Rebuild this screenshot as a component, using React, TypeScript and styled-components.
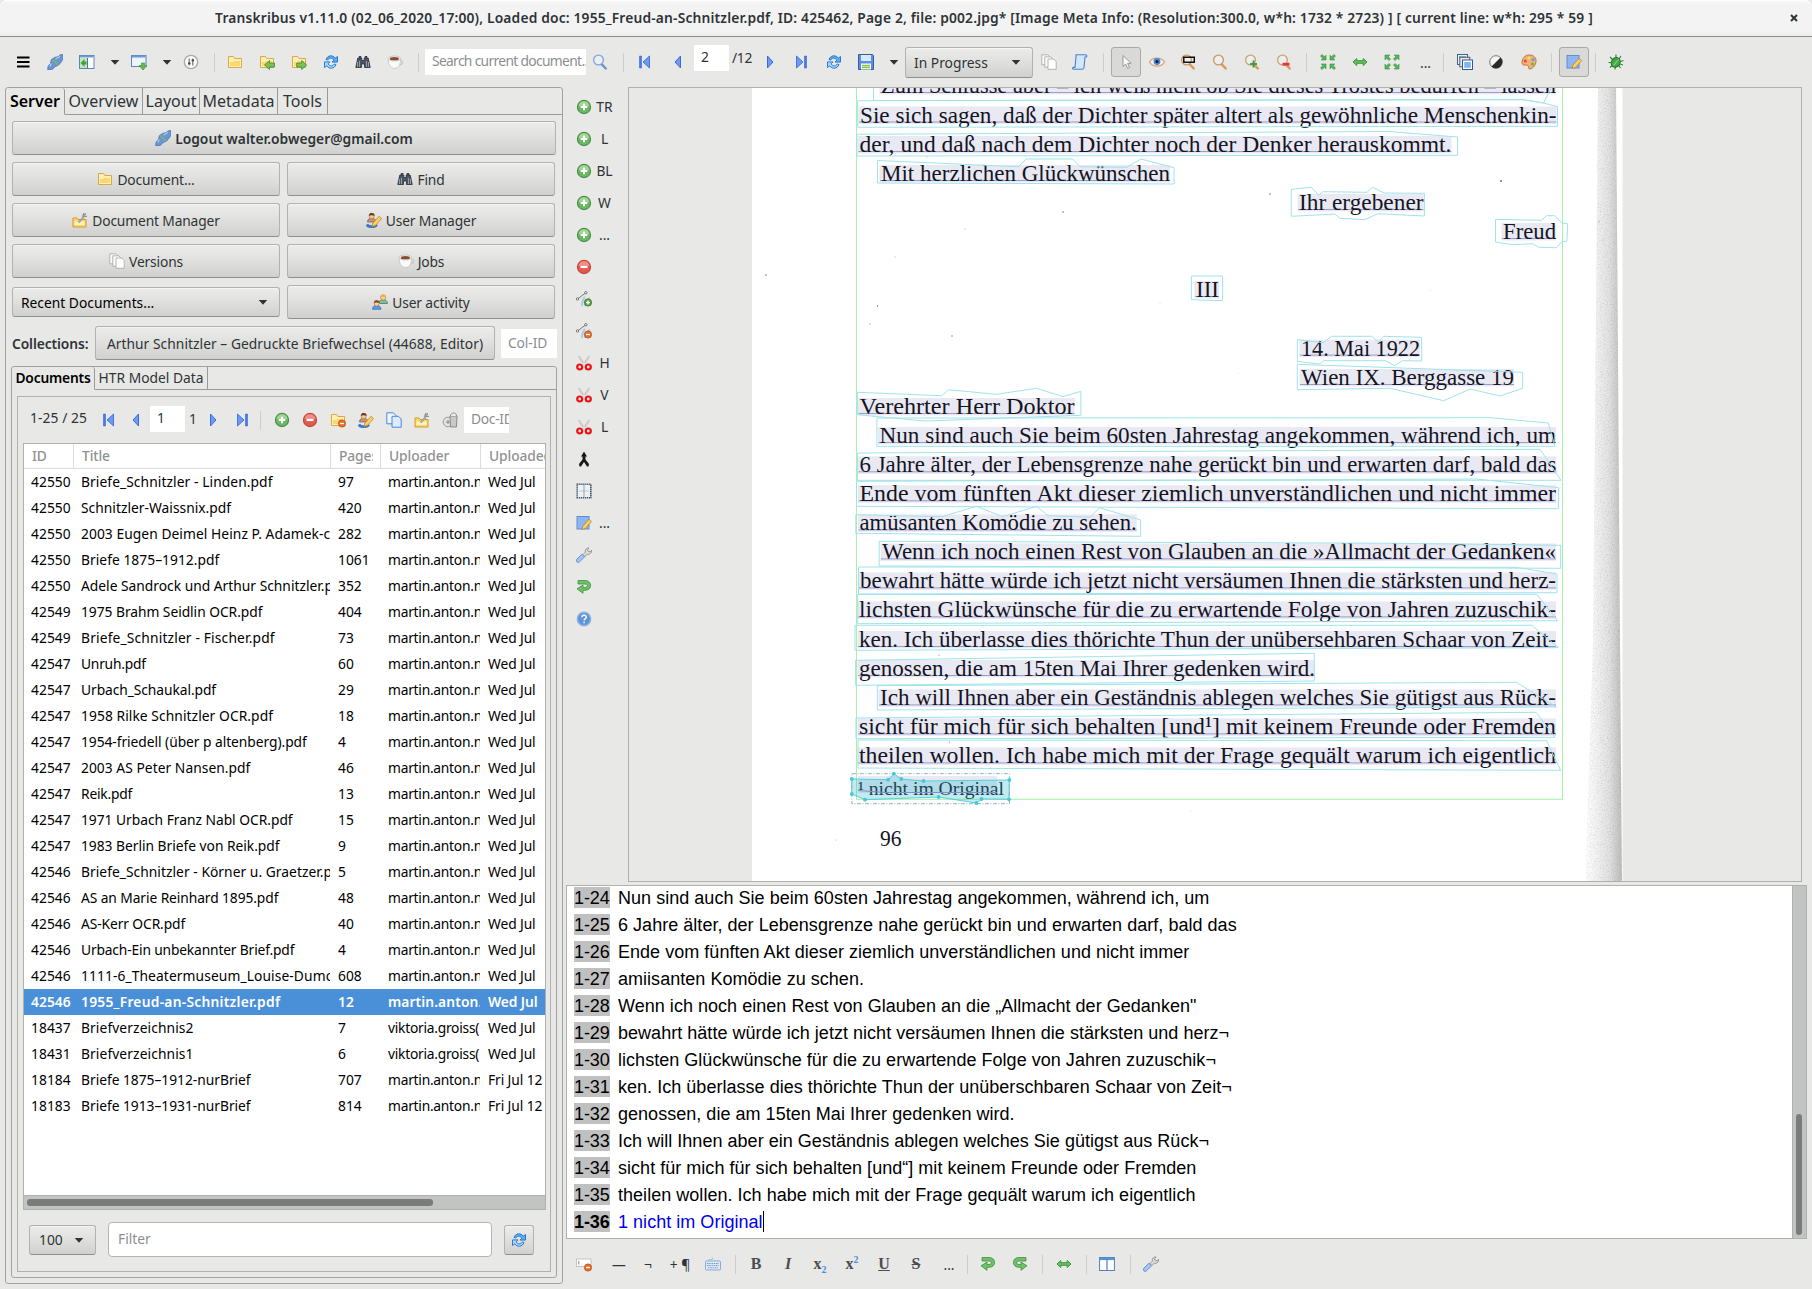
import React from 'react';
import styled, { createGlobalStyle, css } from 'styled-components';

const GlobalStyle = createGlobalStyle`
  * { box-sizing: border-box; }
  html, body { margin: 0; padding: 0; background: #e8e8e7; }
  body {
    width: 1812px; height: 1289px; overflow: hidden;
    font-family: "Noto Sans", "Open Sans", sans-serif;
    font-size: 13.8px; color: #2e3436;
  }
  svg { display: block; flex: none; }
`;

/* ---------- icons ---------- */

type IconName =
  | 'menu' | 'plug' | 'dock' | 'windowDown' | 'settings' | 'folder' | 'folderIn' | 'folderOut'
  | 'refresh' | 'binoculars' | 'cup' | 'search' | 'first' | 'prev' | 'next' | 'last' | 'save'
  | 'pages' | 'scroll' | 'cursor' | 'eye' | 'zoomRect' | 'zoom' | 'zoomIn' | 'zoomOut' | 'shrink'
  | 'widthArrow' | 'expand' | 'images' | 'contrast' | 'palette' | 'edit' | 'bug' | 'add' | 'remove'
  | 'folderRemove' | 'user' | 'users' | 'copy' | 'manager' | 'trash' | 'pointAdd' | 'pointRemove'
  | 'scissors' | 'merge' | 'tableBox' | 'wrench' | 'undo' | 'redo' | 'help' | 'fieldRemove'
  | 'keyboard' | 'columns' | 'caret';

const folderShape = (
  <>
    <path d="M1.500 13.500V2.500h5l1.300 2h6.700v9z" fill="#fdf0b4" stroke="#dfa546" />
    <path d="M2.500 12.500v-5h4l1-1h6v6z" fill="#f8d970" stroke="#fff3c0" strokeWidth=".7" />
  </>
);
const badge = (color: string, edge: string, plus: boolean) => (
  <>
    <circle cx="12" cy="11.500" r="3.600" fill={color} stroke={edge} strokeWidth=".8" />
    <path d={plus ? 'M10 11.500h4M12 9.500v4' : 'M10 11.500h4'} stroke="#fff" strokeWidth="1.300" />
  </>
);
const lens = (ring: string, handle: string) => (
  <>
    <path d="M9.800 10.300l4 4.200" stroke={handle} strokeWidth="2.400" strokeLinecap="round" />
    <circle cx="6.500" cy="6" r="4.900" fill="#eceff1" fillOpacity=".8" stroke={ring} strokeWidth="1.300" />
  </>
);
const curveShape = (
  <>
    <path d="M6 15c0-4 1-7 3-9M9 15c0-4 1-6 5-8" stroke="#a9c8ef" strokeWidth="2" fill="none" />
    <path d="M1.500 8L9.500 2" stroke="#777" fill="none" />
    <circle cx="1.500" cy="8" r="1.200" fill="#fff" stroke="#555" strokeWidth=".8" />
    <circle cx="9.800" cy="1.800" r="1.200" fill="#fff" stroke="#555" strokeWidth=".8" />
  </>
);
const personHead = (x: number, y: number, shirt: string, hair: string) => (
  <g transform={`translate(${x} ${y})`}>
    <path d="M0 9c0-3 2-3.800 4-3.800S8.500 6 8.500 9z" fill={shirt} stroke="#2f67b5" strokeWidth=".7" />
    <circle cx="4.200" cy="3" r="2.600" fill="#fbcf9b" stroke="#b5722d" strokeWidth=".6" />
    <path d="M1.400 3C1.200.5 3 0 4.300 0s3 .6 2.800 2.800C5.500 2.500 3 1.500 1.400 3z" fill={hair} />
  </g>
);
const pencilShape = (
  <path d="M6 14.500l.8-3.200 6.200-7 2.500 2.300-6.200 7z" fill="#f9d35d" stroke="#c07f2c" strokeWidth=".8" />
);
const uTurn = (
  <path d="M2 1.500h7c7.500 0 7.500 9.800 0 9.800H7v3L1 9.800 7 6v2.500h2c3 0 3-3.500 0-3.500H2z" fill="#6fc069" stroke="#3b923e" strokeWidth=".8" />
);
const arrowHead = (x: number, y: number, r: number) => (
  <path key={`${x}-${y}`} transform={`translate(${x} ${y}) rotate(${r})`} d="M2.500 2.500H-2.300L-.7.9-3-1.400-1.400-3 .9-.7 2.500-2.300z" fill="#5ab55a" stroke="#2f8f37" strokeWidth=".6" />
);
const navBlue = '#6d9af2';
const navEdge = '#2454d4';

const icons: Record<IconName, React.ReactNode> = {
  menu: <path d="M2 3.500h12.500M2 8h12.500M2 12.500h12.500" stroke="#000" strokeWidth="2" />,
  plug: (
    <>
      <path d="M12.500 1.200L15.600.3l.2 3.400-.8 3.300-3.300 4-3.700 1.700-2.500 2.600-4.800.4.400-3.700 2.300-2.300.9-4.100L8 3.300l3.200-.6z" fill="#6b95d3" stroke="#4a76b8" strokeWidth=".8" />
      <path d="M5.500 5.500l5.500 5.500" stroke="#7dbf5c" strokeWidth="1.300" />
      <path d="M8.500 5l4.500-2.500M4.300 9.500L2.800 12.500" stroke="#b4cdf0" strokeWidth="1.100" />
    </>
  ),
  dock: (
    <>
      <rect x=".5" y="1.500" width="14.500" height="13" fill="#fff" stroke="#5b84bd" />
      <path d="M1 2.500h13.500" stroke="#6c9ad8" strokeWidth="2" />
      <rect x="1" y="4" width="7" height="10" fill="#c5e5bf" />
      <path d="M8.500 4v10" stroke="#4c72a8" />
      <path d="M1.500 9l4-4v2.500h2v3h-2V13z" fill="#3ea53c" />
    </>
  ),
  windowDown: (
    <>
      <rect x=".5" y="1.500" width="14.500" height="11" fill="#eef4fd" stroke="#5b84bd" />
      <path d="M1 2.500h13.500" stroke="#6c9ad8" strokeWidth="2" />
      <path d="M10.500 9h3v2.500H16L12 16l-4-4.500h2.500z" fill="#69b84d" stroke="#398a2d" strokeWidth=".6" />
    </>
  ),
  settings: (
    <>
      <circle cx="8" cy="8" r="6.700" fill="#fafafa" stroke="#a8a8a8" strokeWidth="1.300" />
      <path d="M6.200 4.500v7M9.800 4.500v7" stroke="#666" strokeWidth="1.100" />
      <path d="M5 9.300h2.500M8.600 6.300h2.500" stroke="#444" strokeWidth="1.700" />
    </>
  ),
  folder: folderShape,
  folderIn: <>{folderShape}<path d="M5.500 11l5-4.500V9h5v4h-5v2.500z" fill="#7cc158" stroke="#3d8931" strokeWidth=".8" /></>,
  folderOut: <>{folderShape}<path d="M15.700 11l-5-4.500V9h-5v4h5v2.500z" fill="#7cc158" stroke="#3d8931" strokeWidth=".8" /></>,
  refresh: (
    <>
      <path d="M3 5.500C4.500 1 10 .6 12.200 4.200L14.500 2.500v5.600H9l2-2C9 3.500 6 3.500 4.800 6z" fill="#5cb1f6" stroke="#1c6fd0" strokeWidth=".9" />
      <path d="M13 10.500c-1.500 4.500-7 4.900-9.200 1.300L1.500 13.500V7.900H7l-2 2c2 2.600 5 2.600 6.200.1z" fill="#a6d8fb" stroke="#1c6fd0" strokeWidth=".9" />
    </>
  ),
  binoculars: (
    <>
      <path d="M2.800 4h4v2.500h2.400V4h4l2 9.500H9.500v-3.500h-3v3.500H.8z" fill="#4c5661" stroke="#272e36" strokeWidth=".8" />
      <path d="M3.800 2h2.500v2H3.800zM9.700 2h2.500v2H9.700z" fill="#3a4149" />
      <path d="M2.500 8v5M4.500 7v6M11.500 7v6M13.500 8v5" stroke="#98a7b6" strokeWidth=".9" />
    </>
  ),
  cup: (
    <>
      <path d="M12.500 6.500c4-1 4 4.500-.7 4.500" fill="none" stroke="#c9c9c9" strokeWidth="1.300" />
      <path d="M1.200 5C1.200 10 3 14.500 7.500 14.500S13.500 10 13.500 5z" fill="#fafafa" stroke="#c2c2c2" strokeWidth=".8" />
      <ellipse cx="7.400" cy="4.500" rx="6.200" ry="2.500" fill="#f2f2f2" stroke="#bdbdbd" strokeWidth=".8" />
      <ellipse cx="7.400" cy="4.700" rx="4.600" ry="1.600" fill="#8d4a2e" />
    </>
  ),
  search: lens('#7ba7da', '#6b96cf'),
  first: <><path d="M2.500 2h2v12h-2z" fill="#4a7ae6" stroke={navEdge} strokeWidth=".5" /><path d="M12.500 2v12L6 8z" fill={navBlue} stroke={navEdge} strokeWidth=".7" /></>,
  prev: <path d="M10.500 2v12L5 8z" fill={navBlue} stroke={navEdge} strokeWidth=".8" />,
  next: <path d="M5.500 2v12L11 8z" fill={navBlue} stroke={navEdge} strokeWidth=".8" />,
  last: <><path d="M11.500 2h2v12h-2z" fill="#4a7ae6" stroke={navEdge} strokeWidth=".5" /><path d="M3.500 2v12L10 8z" fill={navBlue} stroke={navEdge} strokeWidth=".7" /></>,
  save: (
    <>
      <path d="M.5.500h14l1 1v14H.5z" fill="#5c8fe0" stroke="#2d5dab" />
      <rect x="3" y="1" width="10" height="6" fill="#dbe9ff" />
      <rect x="3" y="9.500" width="10" height="6" fill="#fff" />
      <path d="M4 11.500h8M4 13.500h8" stroke="#8cc63e" strokeWidth="1.300" />
    </>
  ),
  pages: (
    <>
      <path d="M.8.800h6l2 2v8h-8z" fill="#fbfbfb" stroke="#adadad" strokeWidth=".9" />
      <path d="M3.800 2.800h6l2 2v8.400h-8z" fill="#fbfbfb" stroke="#adadad" strokeWidth=".9" />
      <path d="M7 5h5.500l2.700 2.700v7.600H7z" fill="#fff" stroke="#adadad" strokeWidth=".9" />
    </>
  ),
  scroll: <path d="M4 .800h9.500c1.800 0 1.800 2.200.3 2.200H13l-1 10.500c-.2 1.700-1.200 1.700-2 1.700H1.500c-1.400 0-1.200-1.800.2-1.800H3L4 2.500z" fill="#d3e6fc" stroke="#4a82d0" strokeWidth="1.100" />,
  cursor: <path d="M5 1.500v11l2.700-2.400 2 4.400 1.900-.9-2-4.200h3.600z" fill="#fafafa" stroke="#909090" strokeWidth=".9" />,
  eye: (
    <>
      <path d="M.5 8C3.500 2.700 12.500 2.700 15.500 8 12.500 13.300 3.500 13.300.5 8z" fill="#f6f2ef" stroke="#dfa57a" strokeWidth="1.300" />
      <circle cx="8" cy="7.500" r="3.400" fill="#4b86d8" />
      <circle cx="8" cy="7.500" r="1.500" fill="#0c1d3c" />
    </>
  ),
  zoomRect: <>{lens('#c99a5b', '#d59c58')}<rect x="3.800" y="3.200" width="10.500" height="5" fill="none" stroke="#000" strokeWidth="1.400" /></>,
  zoom: lens('#c99a5b', '#d59c58'),
  zoomIn: <>{lens('#c9a46e', '#d59c58')}<path d="M9.500 6.500v7M6 10h7" stroke="#3f9f42" strokeWidth="2" /></>,
  zoomOut: <>{lens('#c9a46e', '#d59c58')}<path d="M6.500 10.200h7" stroke="#e8333a" strokeWidth="2.800" /></>,
  shrink: <>{arrowHead(3.500, 3.500, 0)}{arrowHead(12.500, 3.500, 90)}{arrowHead(12.500, 12.500, 180)}{arrowHead(3.500, 12.500, 270)}</>,
  expand: <>{arrowHead(3.500, 3.500, 180)}{arrowHead(12.500, 3.500, 270)}{arrowHead(12.500, 12.500, 0)}{arrowHead(3.500, 12.500, 90)}</>,
  widthArrow: <path d="M1 8l3.800-3.500v2.200h6.400V4.500L15 8l-3.800 3.500V9.300H4.800v2.200z" fill="#66c05e" stroke="#2f8f33" strokeWidth=".9" />,
  images: (
    <>
      <rect x=".5" y=".500" width="10" height="10" fill="#e8f0fb" stroke="#41618f" />
      <rect x="2" y="2" width="7" height="3" fill="#8dbb8a" />
      <rect x="2.800" y="3.300" width="10" height="9.500" fill="#f4e3e0" stroke="#41618f" />
      <rect x="5.500" y="6" width="10" height="9.500" fill="#fff" stroke="#34588e" />
      <rect x="7.200" y="8" width="6.600" height="5.800" fill="#7fb5f0" />
    </>
  ),
  contrast: (
    <>
      <circle cx="8" cy="8" r="6.300" fill="#f5f5f5" stroke="#777" />
      <path d="M12.500 3.500A6.300 6.300 0 0 1 3.500 12.500z" fill="#2a2a2a" />
    </>
  ),
  palette: (
    <>
      <path d="M8 1c4.500 0 7.500 2.500 7 6.500C14.600 12 11 15 9 15c-2.500 0-.5-3-2.500-3.700C4.500 10.700 1 12 1 8.500 1 4.500 4 1 8 1z" fill="#f3b077" stroke="#b86b2d" strokeWidth=".9" />
      <circle cx="4.300" cy="7" r="1.500" fill="#e9463c" /><circle cx="8" cy="4" r="1.500" fill="#f9e04c" />
      <circle cx="12" cy="5.500" r="1.500" fill="#58a3ee" /><circle cx="11.500" cy="10" r="1.500" fill="#5dbb4b" />
    </>
  ),
  edit: <><rect x="1" y="1.500" width="12" height="12.500" fill="#8fb5f0" stroke="#5f8dd3" />{pencilShape}</>,
  bug: (
    <>
      <path d="M2 3l3 3M8 .500v3M13 2l-2 3M15.500 6.500L12 7.500M.5 8.500h4M2 13.500L5 11M7 15.500l.5-3M12.500 14L10.500 11M15 11l-3-1" stroke="#2c8c31" strokeWidth="1.200" />
      <ellipse cx="8" cy="8.500" rx="4.300" ry="5" transform="rotate(35 8 8)" fill="#45a948" stroke="#23762a" />
      <path d="M5.500 11.500l5-6" stroke="#a4dd9e" strokeWidth="1" />
    </>
  ),
  add: <><circle cx="8" cy="8" r="6.600" fill="#6cb865" stroke="#4c8f49" strokeWidth="1.100" /><path d="M2.700 7a5.300 4.800 0 0 1 10.600 0z" fill="#9fd698" /><path d="M4.700 8h6.600M8 4.700v6.600" stroke="#fff" strokeWidth="2" /></>,
  remove: <><circle cx="8" cy="8" r="6.600" fill="#e2594f" stroke="#c04a42" strokeWidth="1.100" /><path d="M2.700 7a5.300 4.800 0 0 1 10.600 0z" fill="#f08d84" /><path d="M4.500 8h7" stroke="#fff" strokeWidth="2.200" /></>,
  folderRemove: <>{folderShape}{badge('#e9702a', '#b84e12', false)}</>,
  user: <>{personHead(1.500, 1, '#e98a4b', '#6d3b1b')}<path d="M.8 12.500c2 3 8 3 10 0" stroke="#3c78cc" strokeWidth="3" fill="none" />{pencilShape}</>,
  users: <>{personHead(7, .5, '#7bc96b', '#eab04b')}{personHead(.5, 6.300, '#5c9ae6', '#7c4a23')}</>,
  copy: (
    <>
      <path d="M.8.800h6.500l2.500 2.500v8.500h-9z" fill="#eef5fe" stroke="#4b86d6" />
      <path d="M6 4.300h6.500l2.700 2.700v8.200H6z" fill="#dcebfd" stroke="#4b86d6" />
    </>
  ),
  manager: (
    <>
      <path d="M1 15V6h4l1 1.500h8V15z" fill="#f8d96c" stroke="#d9982f" />
      <path d="M2.500 9.500h10V13h-10z" fill="#fff2b8" />
      <path d="M6.500 10.500l4.500-4.500C10.500 3.500 12 2 14 2" stroke="#a5a5a5" strokeWidth="2.200" fill="none" />
      <path d="M11.700 1v3.300H15" stroke="#949494" strokeWidth="1.200" fill="none" />
    </>
  ),
  trash: (
    <>
      <circle cx="6" cy="10" r="4.800" fill="#e3e3e3" stroke="#9a9a9a" />
      <path d="M8 4h7l-.6 11H8.500z" fill="#c9c9c9" stroke="#8a8a8a" />
      <path d="M8.500 4c0-4 6-4 6 0" fill="#eee" stroke="#8a8a8a" />
      <path d="M4 10h4M6 8v4" stroke="#888" />
    </>
  ),
  pointAdd: <>{curveShape}{badge('#5aa43a', '#38741f', true)}</>,
  pointRemove: <>{curveShape}{badge('#e9702a', '#b84e12', false)}</>,
  scissors: (
    <>
      <path d="M1.500 1l2.300.3L10 10H7.500zM14.500 1l-2.300.3L6 10h2.500z" fill="#c6c9cc" />
      <circle cx="3.700" cy="12" r="2.500" fill="none" stroke="#f01010" strokeWidth="2.200" />
      <circle cx="12.300" cy="12" r="2.500" fill="none" stroke="#f01010" strokeWidth="2.200" />
    </>
  ),
  merge: <path d="M8 .500l3 5H9.500v3l3.500 4.500-.5 2.500H11L8 11l-3 4.500H3.500L3 13l3.500-4.500v-3H5z" fill="#1a1a1a" />,
  tableBox: (
    <>
      <rect x="1.200" y="1.200" width="13.600" height="13.600" fill="#eef1f4" stroke="#3e5872" strokeWidth="1.600" strokeDasharray="1.300 .7" />
      <path d="M8 2v12" stroke="#8c98a5" strokeWidth=".9" />
      <path d="M3.500 8h9" stroke="#8c98a5" strokeWidth=".9" strokeDasharray="1 1" />
    </>
  ),
  wrench: (
    <>
      <path d="M1 15c-1.200-1.600-.4-2.800 1-4l4-3.800 2.600 2.600-4 4C3.400 15 2.200 16 1 15z" fill="#a5c5f2" stroke="#4f81cc" strokeWidth=".8" />
      <path d="M7 7.500l2.300-2.300C8.800 2.500 11 .6 13 1l-1.500 1.800.9 1.800 2 .1 1.200-1.500C16 6 13.500 8 11.300 7.200L9 9.500z" fill="#dcdcdc" stroke="#858585" strokeWidth=".8" />
    </>
  ),
  undo: uTurn,
  redo: <g transform="translate(16 0) scale(-1 1)">{uTurn}</g>,
  help: (
    <>
      <circle cx="8" cy="8" r="6.700" fill="#5f95d6" stroke="#8fb3e0" strokeWidth="1.400" />
      <path d="M5.900 6.300c0-2.700 4.400-2.700 4.400-.2C10.300 7.800 8.100 7.700 8.100 9.500M8.100 10.800v1.500" stroke="#fff" strokeWidth="1.400" fill="none" />
    </>
  ),
  fieldRemove: <><rect x=".5" y="3" width="14.500" height="7.500" fill="#fff" stroke="#c4c4c4" /><path d="M2.800 5v3.500" stroke="#888" />{badge('#e9702a', '#b84e12', false)}</>,
  keyboard: (
    <>
      <path d="M3 5.500C3 2 8 5 8 2" stroke="#9fb2c8" fill="none" />
      <rect x=".5" y="5" width="15" height="9" rx="1" fill="#dce9f8" stroke="#8cadd4" />
      <path d="M2 7.500h12M2 9.500h12M3 11.800h10" stroke="#7899c2" strokeWidth="1.100" strokeDasharray="1.500 .8" />
    </>
  ),
  columns: <><rect x=".6" y="1.500" width="14.800" height="13" fill="#fff" stroke="#4f7fbe" /><path d="M.6 2.800h14.800" stroke="#5d92d8" strokeWidth="2.600" /><path d="M8 3v11.500" stroke="#4f7fbe" strokeWidth="1.200" /></>,
  caret: <path d="M3.700 6h8.600L8 10.700z" fill="#2e3436" />,
};

const Icon = ({ name, size = 16 }: { name: IconName; size?: number }) => (
  <svg width={size} height={size} viewBox="0 0 16 16" fill="none">{icons[name]}</svg>
);

/* ---------- window frame ---------- */

const Window = styled.div`
  width: 1812px; height: 1289px; display: flex; flex-direction: column;
  background: #e8e8e7; overflow: hidden;
`;
const TitleBar = styled.header`
  height: 37px; display: grid; grid-template-columns: 37px 1fr 37px; align-items: center;
  background: linear-gradient(#fafafa, #f3f3f3 4px, #f3f3f3 31px, #ececeb);
  border-bottom: 1px solid #8d8d8a; border-radius: 7px 7px 0 0;
  box-shadow: inset 0 1px 0 #fff;
`;
const Title = styled.h1`
  grid-column: 2; margin: 0; text-align: center; white-space: nowrap; padding-right: 4px;
  font-size: 13.8px; font-weight: 600; letter-spacing: 0.17px; line-height: 34px;
`;
const CloseButton = styled.span`
  display: grid; place-items: center; height: 34px;
`;

const Toolbar = styled.div`
  height: 50px; display: flex; align-items: center; padding-left: 6px; flex: none;
`;
const Tool = styled.span<{ $w?: number; $dx?: number }>`
  width: ${p => p.$w ?? 32}px; flex: none; display: flex; justify-content: center; align-items: center;
  padding-left: ${p => p.$dx ?? 0}px; white-space: nowrap;
`;
const Separator = styled.span<{ $before?: number; $after?: number }>`
  width: 1px; height: 19px; flex: none; background: #cdcdca;
  margin: 0 ${p => p.$after ?? 6}px 0 ${p => p.$before ?? 6}px;
`;
const ToggleTool = styled.span`
  width: 30px; height: 30px; flex: none; display: grid; place-items: center;
  background: #d9d9d7; border: 1px solid #a9a9a6; border-radius: 3px;
`;
const PlainField = styled.span<{ $w: number; $h?: number; $muted?: boolean; $mr?: number; $lift?: number; $tracking?: number }>`
  width: ${p => p.$w}px; height: ${p => p.$h ?? 26}px; flex: none; background: #fff; overflow: hidden;
  padding-left: 7px; line-height: ${p => (p.$h ?? 26) - 2}px; white-space: nowrap;
  color: ${p => (p.$muted ? '#8b8e8f' : '#2e3436')}; margin-right: ${p => p.$mr ?? 0}px;
  margin-bottom: ${p => p.$lift ?? 0}px; letter-spacing: ${p => p.$tracking ?? 0}px;
`;
const FieldSuffix = styled.span<{ $w: number; $lift?: number; $tracking?: number }>`
  width: ${p => p.$w}px; flex: none; margin-bottom: ${p => p.$lift ?? 9}px; line-height: 18px;
  white-space: nowrap; letter-spacing: ${p => p.$tracking ?? 0}px;
`;
const raised = css`
  background: linear-gradient(#ececea, #e2e2e0 40%, #d0d0ce);
  border: 1px solid #b2b2af; border-bottom-color: #90908d; border-radius: 3px;
  box-shadow: inset 0 1px 0 #f4f4f3;
`;
const Combo = styled.span<{ $w: number; $h: number; $dark?: boolean; $pad?: number; $top?: number }>`
  ${raised}
  width: ${p => p.$w}px; height: ${p => p.$h}px; flex: none; display: flex; align-items: center;
  justify-content: space-between; padding: 0 8px 0 ${p => p.$pad ?? 8}px;
  margin-top: ${p => p.$top ?? 0}px; color: ${p => (p.$dark ? '#000' : '#2e3436')};
`;
const PushButton = styled.span<{ $w?: number; $bold?: boolean; $tracking?: number }>`
  ${raised}
  ${p => p.$w && css`width: ${p.$w}px;`}
  height: 34px; display: flex; align-items: center; justify-content: center; gap: 4px;
  font-weight: ${p => (p.$bold ? 600 : 400)}; white-space: nowrap; letter-spacing: ${p => p.$tracking ?? -0.15}px;
`;

/* ---------- left side ---------- */

const Body = styled.main`
  flex: 1; display: flex; min-height: 0;
`;
const ServerPanel = styled.section`
  width: 558px; height: 1197px; margin-left: 5px; flex: none; display: flex; flex-direction: column;
  border: 1px solid #a2a29f; border-radius: 3px;
`;
const Tabs = styled.div<{ $h: number; $size: number }>`
  height: ${p => p.$h}px; display: flex; flex: none; font-size: ${p => p.$size}px;
`;
const Tab = styled.span<{ $w: number; $active?: boolean; $tracking?: number }>`
  width: ${p => p.$w}px; flex: none; display: grid; place-items: center; white-space: nowrap;
  border-right: 1px solid #9a9a97; padding-bottom: 1px; letter-spacing: ${p => p.$tracking ?? 0}px;
  ${p => p.$active
    ? css`font-weight: 600; color: #000; border-bottom: 1px solid transparent; border-radius: 0 3px 0 0;`
    : css`border-bottom: 1px solid #9a9a97;`}
`;
const TabFill = styled.span`
  flex: 1; border-bottom: 1px solid #9a9a97;
`;
const Actions = styled.div`
  display: grid; grid-template-columns: 268px 268px; column-gap: 7px; row-gap: 7px;
  padding: 6px 0 0 6px;
`;
const Wide = styled.div`
  grid-column: 1 / 3; display: grid; width: 544px;
`;
const CollectionRow = styled.div`
  height: 34px; margin: 7px 0 0 6px; display: flex; align-items: center; gap: 6px;
`;
const CollectionLabel = styled.span`
  width: 77px; font-weight: 600; letter-spacing: -0.1px; white-space: nowrap;
`;
const DocumentsFolder = styled.section`
  width: 546px; height: 912px; margin: 6px 0 0 5px; display: flex; flex-direction: column;
  border: 1px solid #a2a29f; border-radius: 3px;
`;
const DocumentsFrame = styled.div`
  width: 534px; height: 876px; margin: 6px 0 0 5px; border: 1px solid #b0b0ad;
  display: flex; flex-direction: column;
`;
const Pager = styled.div`
  height: 46px; display: flex; align-items: center; padding-left: 12px;
`;
const Grid = styled.div`
  width: 523px; height: 767px; margin-left: 5px; background: #fff; border: 1px solid #b0b0ad;
  display: flex; flex-direction: column; flex: none; overflow: hidden;
`;
const rowColumns = css`
  display: grid; grid-template-columns: 50px 257px 50px 100px 64px;
`;
const GridHead = styled.div`
  ${rowColumns}
  height: 25px; border-bottom: 1px solid #dcdcdb; flex: none;
`;
const HeadCell = styled.span`
  padding-left: 8px; border-right: 1px solid #dcdcdb; display: flex;
  &:last-child { border-right: 0; }
`;
const HeadText = styled.span`
  flex: 1; margin-right: 7px; line-height: 24px; font-weight: 500; color: #8f9293; overflow: hidden;
  white-space: nowrap; letter-spacing: -0.1px;
  ${HeadCell}:last-child & { margin-right: 0; }
`;
const GridRow = styled.div<{ $selected?: boolean }>`
  ${rowColumns}
  height: 26px; flex: none; color: ${p => (p.$selected ? '#fff' : '#000')};
  background: ${p => (p.$selected ? '#4a90d9' : 'transparent')};
  font-weight: ${p => (p.$selected ? 600 : 400)};
`;
const Cell = styled.span<{ $tracking?: number }>`
  margin: 0 1px 0 7px; line-height: 25px; overflow: hidden; white-space: nowrap;
  letter-spacing: ${p => p.$tracking ?? 0}px;
  &:last-child { margin-right: 0; }
`;
const HScroll = styled.div`
  height: 14px; margin-top: auto; background: #c2c4c3; border-top: 1px solid #b0b0ad; padding: 3px 0 0 3px;
`;
const Thumb = styled.div<{ $w: number; $h: number }>`
  width: ${p => p.$w}px; height: ${p => p.$h}px; border-radius: 3px; background: #7a7c7b;
`;
const FilterRow = styled.div`
  flex: 1; display: flex; align-items: center; padding: 0 0 2px 11px;
`;
const FilterField = styled.span`
  width: 384px; height: 35px; margin: 0 12px; border: 1px solid #b5b5b2; border-radius: 4px; background: #fff;
  color: #8b8e8f; line-height: 31px; padding-left: 9px;
`;
const SquareButton = styled.span`
  ${raised}
  width: 30px; height: 30px; display: grid; place-items: center;
`;

/* ---------- right side ---------- */

const Workspace = styled.div`
  flex: 1; display: flex; flex-direction: column; min-width: 0;
`;
const CanvasRow = styled.div`
  display: flex; height: 795px;
`;
const SideTools = styled.div`
  width: 65px; padding: 4px 0 0 13px; display: flex; flex-direction: column;
`;
const SideTool = styled.div`
  height: 32px; display: flex; align-items: center; flex: none;
`;
const SideLabel = styled.span`
  width: 25px; text-align: center; padding-bottom: 1px; white-space: nowrap;
`;
const Canvas = styled.div`
  width: 1174px; height: 795px; border: 1px solid #b0b0ad; overflow: hidden;
`;
const EditorBox = styled.div`
  width: 1241px; height: 354px; margin: 3px 0 0 3px; border: 1px solid #b0b0ad; background: #fff; display: flex;
`;
const EditorLines = styled.div`
  flex: 1; padding: 1px 0 0 7px; font-family: "Liberation Sans", Arial, sans-serif; font-size: 18px; color: #000;
  letter-spacing: 0.03px;
`;
const EditorLine = styled.div<{ $current?: boolean }>`
  height: 27px; display: flex; align-items: flex-start; line-height: 23px; white-space: nowrap;
  color: ${p => (p.$current ? '#0000f0' : '#000')};
`;
const LineNo = styled.span<{ $current?: boolean }>`
  width: 36px; height: 21px; margin-right: 8px; background: #c0c0c0; color: #000; flex: none;
  font-weight: ${p => (p.$current ? 700 : 400)}; letter-spacing: -0.1px;
`;
const Caret = styled.span`
  width: 1px; height: 21px; background: #000;
`;
const VScroll = styled.div`
  width: 14px; background: #c2c4c3; border-left: 1px solid #b0b0ad; display: flex; flex-direction: column;
  justify-content: flex-end; padding: 0 0 3px 3px;
`;
const FormatBar = styled.div`
  height: 50px; display: flex; align-items: center; padding-left: 5px;
`;
const Glyph = styled.span<{ $italic?: boolean; $line?: string }>`
  font-family: "Liberation Serif", serif; font-size: 16px; font-weight: 700; color: #4a4d4f; line-height: 18px;
  font-style: ${p => (p.$italic ? 'italic' : 'normal')};
  text-decoration: ${p => p.$line ?? 'none'};
`;
const Script = styled.i<{ $shift: number }>`
  font-size: 10px; font-style: normal; color: #4a90e2; line-height: 0; vertical-align: ${p => p.$shift}px;
`;

/* ---------- data ---------- */

/* id, title, pages, uploader, uploaded, title tracking */
type Doc = [string, string, string, string, string, number];
const M = 'martin.anton.n';
const V = 'viktoria.groiss(';
const W = 'Wed Jul';
const F = 'Fri Jul 12';
const docs: Doc[] = [
  ['42550', 'Briefe_Schnitzler - Linden.pdf', '97', M, W, 0.08],
  ['42550', 'Schnitzler-Waissnix.pdf', '420', M, W, 0.02],
  ['42550', '2003 Eugen Deimel Heinz P. Adamek-c', '282', M, W, 0.06],
  ['42550', 'Briefe 1875–1912.pdf', '1061', M, W, 0.04],
  ['42550', 'Adele Sandrock und Arthur Schnitzler.pdf', '352', M, W, 0],
  ['42549', '1975 Brahm Seidlin OCR.pdf', '404', M, W, -0.04],
  ['42549', 'Briefe_Schnitzler - Fischer.pdf', '73', M, W, 0.16],
  ['42547', 'Unruh.pdf', '60', M, W, -0.23],
  ['42547', 'Urbach_Schaukal.pdf', '29', M, W, -0.07],
  ['42547', '1958 Rilke Schnitzler OCR.pdf', '18', M, W, 0.07],
  ['42547', '1954-friedell (über p altenberg).pdf', '4', M, W, -0.05],
  ['42547', '2003 AS Peter Nansen.pdf', '46', M, W, 0.04],
  ['42547', 'Reik.pdf', '13', M, W, -0.2],
  ['42547', '1971 Urbach Franz Nabl OCR.pdf', '15', M, W, -0.02],
  ['42547', '1983 Berlin Briefe von Reik.pdf', '9', M, W, -0.02],
  ['42546', 'Briefe_Schnitzler - Körner u. Graetzer.pdf', '5', M, W, 0.04],
  ['42546', 'AS an Marie Reinhard 1895.pdf', '48', M, W, -0.09],
  ['42546', 'AS-Kerr OCR.pdf', '40', M, W, -0.1],
  ['42546', 'Urbach-Ein unbekannter Brief.pdf', '4', M, W, -0.16],
  ['42546', '1111-6_Theatermuseum_Louise-Dumo', '608', M, W, 0.1],
  ['42546', '1955_Freud-an-Schnitzler.pdf', '12', M, W, 0.26],
  ['18437', 'Briefverzeichnis2', '7', V, W, 0.1],
  ['18431', 'Briefverzeichnis1', '6', V, W, 0.1],
  ['18184', 'Briefe 1875–1912-nurBrief', '707', M, F, -0.02],
  ['18183', 'Briefe 1913–1931-nurBrief', '814', M, F, -0.02],
];
const SELECTED = 20;

const transcript: [string, string][] = [
  ['1-24', 'Nun sind auch Sie beim 60sten Jahrestag angekommen, während ich, um'],
  ['1-25', '6 Jahre älter, der Lebensgrenze nahe gerückt bin und erwarten darf, bald das'],
  ['1-26', 'Ende vom fünften Akt dieser ziemlich unverständlichen und nicht immer'],
  ['1-27', 'amiisanten Komödie zu schen.'],
  ['1-28', 'Wenn ich noch einen Rest von Glauben an die „Allmacht der Gedanken"'],
  ['1-29', 'bewahrt hätte würde ich jetzt nicht versäumen Ihnen die stärksten und herz¬'],
  ['1-30', 'lichsten Glückwünsche für die zu erwartende Folge von Jahren zuzuschik¬'],
  ['1-31', 'ken. Ich überlasse dies thörichte Thun der unüberschbaren Schaar von Zeit¬'],
  ['1-32', 'genossen, die am 15ten Mai Ihrer gedenken wird.'],
  ['1-33', 'Ich will Ihnen aber ein Geständnis ablegen welches Sie gütigst aus Rück¬'],
  ['1-34', 'sicht für mich für sich behalten [und“] mit keinem Freunde oder Fremden'],
  ['1-35', 'theilen wollen. Ich habe mich mit der Frage gequält warum ich eigentlich'],
  ['1-36', '1 nicht im Original'],
];

/* Scan lines: text, left, right, baseline, outline polygon (window coordinates). */
type ScanLine = { t: string; l: number; r: number; y: number; p: string };
const scan: ScanLine[] = [
  { t: 'Zum Schlusse aber – ich weiß nicht ob Sie dieses Trostes bedürfen – lassen', l: 881, r: 1556, y: 93, p: '873.5,70 873.5,100.5 1523,99.7 1543.5,103 1550,90 1556,70' },
  { t: 'Sie sich sagen, daß der Dichter später altert als gewöhnliche Menschenkin-', l: 860, r: 1556.5, y: 122.5, p: '857.7,100.7 1523,99.7 1543.5,103 1557.5,106.7 1557.5,126.3 857.7,127.3' },
  { t: 'der, und daß nach dem Dichter noch der Denker herauskommt.', l: 859.5, r: 1451.5, y: 152, p: '857,134.3 1388.5,131.5 1457.6,137 1457.6,155.3 857,156' },
  { t: 'Mit herzlichen Glückwünschen', l: 881, r: 1170, y: 181, p: '877.5,160.5 1018.5,166.7 1026,159 1072.5,159 1080,166.7 1126.5,167.3 1141,159 1174,167.7 1174,184 877.5,183' },
  { t: 'Ihr ergebener', l: 1299, r: 1423.5, y: 210, p: '1291.3,189.3 1311.2,187.3 1319,195 1323,191.7 1367,192.3 1372.5,187.3 1384.2,193 1424.4,193.3 1424.4,216 1377.6,213.7 1365.1,219.7 1339.7,218.3 1335,214 1291.3,216.3' },
  { t: 'Freud', l: 1503, r: 1556, y: 239, p: '1495.5,219.3 1541.5,220.3 1546.6,215.7 1554.4,215.7 1562.2,223.3 1567.7,223.7 1566.9,241.3 1562.2,241.3 1556.4,247.7 1538.8,247.3 1532.6,243.7 1512.3,244.7 1495.5,242' },
  { t: 'III', l: 1196, r: 1219, y: 297, p: '1191.4,276 1222.6,276 1222.6,300.7 1191.4,299.7' },
  { t: '14. Mai 1922', l: 1301, r: 1420, y: 355.6, p: '1297.3,339.7 1323.7,342.7 1331.3,336.3 1371.7,336.3 1378.3,342 1383.3,336.3 1421.7,337.3 1421.7,361 1402.3,360.7 1394.7,365.7 1385.3,360.7 1323.7,360.7 1319.3,364 1297.3,361.3' },
  { t: 'Wien IX. Berggasse 19', l: 1301, r: 1514, y: 385, p: '1297.3,364.3 1522.7,372.3 1522.7,388.3 1500,396 1470.3,389 1443.7,400.7 1390,388.3 1297.3,389.7' },
  { t: 'Verehrter Herr Doktor', l: 859.6, r: 1074.6, y: 414, p: '857.4,392.3 942,395.7 948.4,389.7 996.3,394.3 1036.5,388.3 1062.9,396.7 1080.9,391.3 1080.9,415.3 925.5,421 857.4,414.7' },
  { t: 'Nun sind auch Sie beim 60sten Jahrestag angekommen, während ich, um', l: 879.5, r: 1556, y: 443, p: '876.9,418 1490,417.7 1548.3,423 1555,446.3 876.9,446.3' },
  { t: '6 Jahre älter, der Lebensgrenze nahe gerückt bin und erwarten darf, bald das', l: 859.5, r: 1556.5, y: 472.3, p: '857.4,453 1540,449.3 1561,480.3 857.4,480.3' },
  { t: 'Ende vom fünften Akt dieser ziemlich unverständlichen und nicht immer', l: 859.5, r: 1556, y: 501.3, p: '856.6,481.3 1476,479 1558.7,487.7 1558.3,508.7 856.6,506.3' },
  { t: 'amüsanten Komödie zu sehen.', l: 859.5, r: 1136.7, y: 530.4, p: '855.8,514.7 941.9,516.7 976.4,506.3 1002.8,516.7 1036.5,506.3 1047.9,515.7 1090,517.3 1099.6,507.7 1140.6,520 1140.6,536.3 855.8,533.3' },
  { t: 'Wenn ich noch einen Rest von Glauben an die »Allmacht der Gedanken«', l: 882, r: 1556, y: 559.4, p: '879.2,541.3 1400,543.3 1560.7,545.3 1560.7,568.3 879.2,566' },
  { t: 'bewahrt hätte würde ich jetzt nicht versäumen Ihnen die stärksten und herz-', l: 860, r: 1556, y: 588.4, p: '858.5,567 1516,567.3 1557,574 1557,592.7 858.5,594' },
  { t: 'lichsten Glückwünsche für die zu erwartende Folge von Jahren zuzuschik-', l: 859, r: 1556, y: 617.4, p: '857.7,594.5 1536.7,594.3 1557.7,620.7 857.7,623.7' },
  { t: 'ken. Ich überlasse dies thörichte Thun der unübersehbaren Schaar von Zeit-', l: 859, r: 1556, y: 647, p: '855,625.3 1531.8,625.3 1558.3,647.5 855,650.3' },
  { t: 'genossen, die am 15ten Mai Ihrer gedenken wird.', l: 859, r: 1315, y: 676, p: '855.6,660.3 1314.3,653.3 1314.3,681 855.6,685.3' },
  { t: 'Ich will Ihnen aber ein Geständnis ablegen welches Sie gütigst aus Rück-', l: 880, r: 1556, y: 705.4, p: '877.3,685.7 1516.3,682.3 1556.4,707 877.3,710' },
  { t: 'sicht für mich für sich behalten [und¹] mit keinem Freunde oder Fremden', l: 859, r: 1556, y: 734.4, p: '856,718 1536,712.3 1555,737.3 856,738.7' },
  { t: 'theilen wollen. Ich habe mich mit der Frage gequält warum ich eigentlich', l: 859, r: 1556, y: 763.4, p: '858,740 1546.5,740.7 1560.6,770.3 858,768' },
];
const specks: [number, number, number][] = [
  [766, 275, 0.9], [1063, 212, 0.9], [1270, 194, 0.9], [1501, 181, 1.1], [927, 157, 0.5], [877.5, 306, 0.8],
  [870, 324, 0.7], [952, 336, 0.8], [965, 229, 0.5], [895, 257, 0.5], [1599, 222, 0.6], [1160, 303, 0.4],
  [939, 655, 0.6], [949.5, 742, 0.6], [836, 840, 0.5], [1191, 811, 0.3], [1430, 290, 0.4], [1238, 373, 0.3],
];
const selectedOutline: [number, number][] = [
  [851.8, 779], [888.1, 779.7], [893.8, 773.7], [901.3, 779], [923.5, 781], [1009.4, 780],
  [1009, 799.3], [981.6, 799], [976.4, 803], [938.6, 797], [865, 799.7], [851.8, 794],
];

const ScanText = styled.text`
  font-family: "Liberation Serif", serif; fill: #15151f;
`;

const ScanView = () => (
  <svg width="1172" height="793" viewBox="629 88 1172 793">
    <defs>
      <linearGradient id="gutter" x1="0" x2="1">
        <stop offset="0" stopColor="#fff" />
        <stop offset=".3" stopColor="#f3f3f3" />
        <stop offset=".65" stopColor="#e2e2e2" />
        <stop offset="1" stopColor="#bdbdbd" />
      </linearGradient>
      <filter id="grain" x="0" y="0" width="1" height="1">
        <feTurbulence type="fractalNoise" baseFrequency=".7" numOctaves="2" result="n" />
        <feColorMatrix in="n" values="0 0 0 0 0  0 0 0 0 0  0 0 0 0 0  .4 .4 0 0 -.37" result="g" />
        <feComposite in="g" in2="SourceGraphic" operator="in" result="gs" />
        <feMerge><feMergeNode in="SourceGraphic" /><feMergeNode in="gs" /></feMerge>
      </filter>
    </defs>
    <rect x="752" y="80" width="870.5" height="810" fill="#fff" />
    <path d="M1598 80L1593 640 1585 890H1622L1620 640 1616 80z" fill="url(#gutter)" filter="url(#grain)" />
    {specks.map(([x, y, r]) => <circle key={`${x}-${y}`} cx={x} cy={y} r={r * 0.85} fill="#666" />)}
    {scan.map(s => (
      <g key={s.t}>
        <rect x={s.l - 1.5} y={s.y - 16} width={s.r - s.l + 1.5} height="17.5" fill="#e9e9f4" />
        <path d={`M${s.l - 1} ${s.y - 0.5}H${s.r}`} stroke="#9c9ccf" strokeWidth="1" />
        <ScanText x={s.l} y={s.y} textLength={s.r - s.l} lengthAdjust="spacingAndGlyphs" fontSize="24">{s.t}</ScanText>
      </g>
    ))}
    <rect x="856.5" y="70" width="706" height="729.3" fill="none" stroke="#a6f2a6" />
    {scan.map(s => <polygon key={s.p} points={s.p} fill="none" stroke="#9fe3ec" strokeWidth="1" />)}
    <rect x="858" y="776" width="139" height="17" fill="#e9e9f4" />
    <ScanText x="858" y="794.5" textLength="146" lengthAdjust="spacingAndGlyphs" fontSize="19">¹ nicht im Original</ScanText>
    <polygon points={selectedOutline.map(p => p.join(',')).join(' ')} fill="#28b4c8" fillOpacity=".28" stroke="#55cfdd" />
    <path d="M858 790.500L885 792.500H997" stroke="#7f8fc8" fill="none" />
    <rect x="851.8" y="773.7" width="157.6" height="30" fill="none" stroke="#8fb5ba" strokeDasharray="4 1.500 1 1.500" />
    {selectedOutline.map(([x, y]) => <circle key={`${x}-${y}`} cx={x} cy={y} r="1.900" fill="#43c9d9" />)}
    <ScanText x="880" y="846" textLength="21.5" lengthAdjust="spacingAndGlyphs" fontSize="23">96</ScanText>
  </svg>
);

/* ---------- page ---------- */

const sideTools: [IconName, string][] = [
  ['add', 'TR'], ['add', 'L'], ['add', 'BL'], ['add', 'W'], ['add', '...'], ['remove', ''],
  ['pointAdd', ''], ['pointRemove', ''], ['scissors', 'H'], ['scissors', 'V'], ['scissors', 'L'],
  ['merge', ''], ['tableBox', ''], ['edit', '...'], ['wrench', ''], ['undo', ''], ['help', ''],
];

const T = ({ n, w, dx }: { n: IconName; w?: number; dx?: number }) => (
  <Tool $w={w} $dx={dx}><Icon name={n} /></Tool>
);

const MainToolbar = () => (
  <Toolbar>
    <T n="menu" w={33} /><T n="plug" /><T n="dock" /><T n="caret" w={19} dx={5} /><T n="windowDown" w={33} />
    <T n="caret" w={20} dx={4} /><T n="settings" w={32} /><Separator $before={7} $after={4} />
    <T n="folder" /><T n="folderIn" /><T n="folderOut" /><T n="refresh" /><T n="binoculars" /><T n="cup" />
    <Separator $before={7} $after={6} />
    <PlainField $w={161} $muted $tracking={-0.66}>Search current document..</PlainField>
    <T n="search" w={28} /><Separator $before={9} $after={4} />
    <T n="first" w={33} /><T n="prev" w={33} />
    <PlainField $w={35} $lift={8} $mr={3}>2</PlainField>
    <FieldSuffix $w={22} $tracking={-0.3}>/12</FieldSuffix>
    <T n="next" w={31} /><T n="last" /><T n="refresh" w={33} /><T n="save" /><T n="caret" w={23} />
    <Combo $w={128} $h={31} $pad={8}>In Progress<Icon name="caret" /></Combo>
    <T n="pages" w={31} /><T n="scroll" /><Separator $before={7} $after={7} />
    <ToggleTool><Icon name="cursor" /></ToggleTool>
    <T n="eye" w={31} /><T n="zoomRect" /><T n="zoom" /><T n="zoomIn" /><T n="zoomOut" /><Separator $before={6} $after={5} />
    <T n="shrink" /><T n="widthArrow" /><T n="expand" /><Tool $w={35}>...</Tool><Separator $before={0} $after={5} />
    <T n="images" w={31} /><T n="contrast" /><T n="palette" w={33} /><Separator $before={6} $after={7} />
    <ToggleTool><Icon name="edit" /></ToggleTool><Separator $before={6} $after={4} />
    <T n="bug" />
  </Toolbar>
);

const DocumentsTable = () => (
  <Grid>
    <GridHead>
      {['ID', 'Title', 'Pages', 'Uploader', 'Uploaded'].map(h => <HeadCell key={h}><HeadText>{h}</HeadText></HeadCell>)}
    </GridHead>
    {docs.map(([id, title, pages, uploader, date, tracking], i) => (
      <GridRow key={i} $selected={i === SELECTED}>
        <Cell $tracking={0.05}>{id}</Cell>
        <Cell $tracking={tracking}>{title}</Cell>
        <Cell>{pages}</Cell>
        <Cell $tracking={i === SELECTED ? 0.1 : -0.25}>{uploader}</Cell>
        <Cell $tracking={-0.1}>{date}</Cell>
      </GridRow>
    ))}
    <HScroll><Thumb $w={406} $h={7} /></HScroll>
  </Grid>
);

export default function App() {
  return (
    <Window>
      <GlobalStyle />
      <TitleBar>
        <Title>Transkribus v1.11.0 (02_06_2020_17:00), Loaded doc: 1955_Freud-an-Schnitzler.pdf, ID: 425462, Page 2, file: p002.jpg* [Image Meta Info: (Resolution:300.0, w*h: 1732 * 2723) ] [ current line: w*h: 295 * 59 ]</Title>
        <CloseButton><svg width="8" height="8" viewBox="0 0 8 8"><path d="M1 1l6 6M7 1L1 7" stroke="#2e3436" strokeWidth="2" /></svg></CloseButton>
      </TitleBar>
      <MainToolbar />
      <Body>
        <ServerPanel>
          <Tabs $h={27} $size={16}>
            <Tab $w={59} $active>Server</Tab><Tab $w={78}>Overview</Tab><Tab $w={57}>Layout</Tab>
            <Tab $w={78}>Metadata</Tab><Tab $w={50}>Tools</Tab><TabFill />
          </Tabs>
          <Actions>
            <Wide><PushButton $bold $tracking={0}><Icon name="plug" />Logout walter.obweger@gmail.com</PushButton></Wide>
            <PushButton><Icon name="folder" />Document...</PushButton>
            <PushButton><Icon name="binoculars" />Find</PushButton>
            <PushButton><Icon name="manager" />Document Manager</PushButton>
            <PushButton><Icon name="user" />User Manager</PushButton>
            <PushButton><Icon name="pages" />Versions</PushButton>
            <PushButton><Icon name="cup" />Jobs</PushButton>
            <Combo $w={268} $h={30} $top={2} $dark>Recent Documents...<Icon name="caret" /></Combo>
            <PushButton><Icon name="users" />User activity</PushButton>
          </Actions>
          <CollectionRow>
            <CollectionLabel>Collections:</CollectionLabel>
            <PushButton $w={400} $tracking={0.04}>Arthur Schnitzler – Gedruckte Briefwechsel (44688, Editor)</PushButton>
            <PlainField $w={56} $h={29} $muted $tracking={-0.1}>Col-ID</PlainField>
          </CollectionRow>
          <DocumentsFolder>
            <Tabs $h={23} $size={13.8}>
              <Tab $w={83} $active $tracking={-0.2}>Documents</Tab><Tab $w={113}>HTR Model Data</Tab><TabFill />
            </Tabs>
            <DocumentsFrame>
              <Pager>
                <FieldSuffix $w={66} $lift={5} $tracking={0.1}>1-25 / 25</FieldSuffix>
                <T n="first" w={25} /><T n="prev" w={29} />
                <PlainField $w={35} $lift={2} $mr={4}>1</PlainField>
                <FieldSuffix $w={8} $lift={3}>1</FieldSuffix>
                <T n="next" w={32} /><T n="last" w={25} /><Separator $before={6} $after={7} />
                <T n="add" w={28} /><T n="remove" w={28} /><T n="folderRemove" w={28} /><T n="user" w={28} />
                <T n="copy" w={28} /><T n="manager" w={28} /><T n="trash" w={28} />
                <PlainField $w={45} $muted $tracking={-0.3}>Doc-ID</PlainField>
              </Pager>
              <DocumentsTable />
              <FilterRow>
                <Combo $w={67} $h={30} $pad={9}>100<Icon name="caret" /></Combo>
                <FilterField>Filter</FilterField>
                <SquareButton><Icon name="refresh" /></SquareButton>
              </FilterRow>
            </DocumentsFrame>
          </DocumentsFolder>
        </ServerPanel>
        <Workspace>
          <CanvasRow>
            <SideTools>
              {sideTools.map(([n, label], i) => (
                <SideTool key={i}><Icon name={n} /><SideLabel>{label}</SideLabel></SideTool>
              ))}
            </SideTools>
            <Canvas><ScanView /></Canvas>
          </CanvasRow>
          <EditorBox>
            <EditorLines>
              {transcript.map(([no, text]) => (
                <EditorLine key={no} $current={no === '1-36'}>
                  <LineNo $current={no === '1-36'}>{no}</LineNo>{text}{no === '1-36' && <Caret />}
                </EditorLine>
              ))}
            </EditorLines>
            <VScroll><Thumb $w={6} $h={121} /></VScroll>
          </EditorBox>
          <FormatBar>
            <T n="fieldRemove" /><Tool $w={38}>—</Tool><Tool $w={20}>¬</Tool><Tool $w={44}>+ ¶</Tool><T n="keyboard" w={22} />
            <Separator $before={11} $after={4} />
            <Tool><Glyph>B</Glyph></Tool>
            <Tool><Glyph $italic>I</Glyph></Tool>
            <Tool><Glyph>x<Script $shift={-4}>2</Script></Glyph></Tool>
            <Tool><Glyph>x<Script $shift={6}>2</Script></Glyph></Tool>
            <Tool><Glyph $line="underline">U</Glyph></Tool>
            <Tool><Glyph $line="line-through">S</Glyph></Tool>
            <Tool $w={34}>...</Tool><Separator $before={1} $after={4} />
            <T n="undo" /><T n="redo" /><Separator $before={6} $after={5} />
            <T n="widthArrow" /><Separator $before={6} $after={4} />
            <T n="columns" /><Separator $before={7} $after={4} />
            <T n="wrench" />
          </FormatBar>
        </Workspace>
      </Body>
    </Window>
  );
}
